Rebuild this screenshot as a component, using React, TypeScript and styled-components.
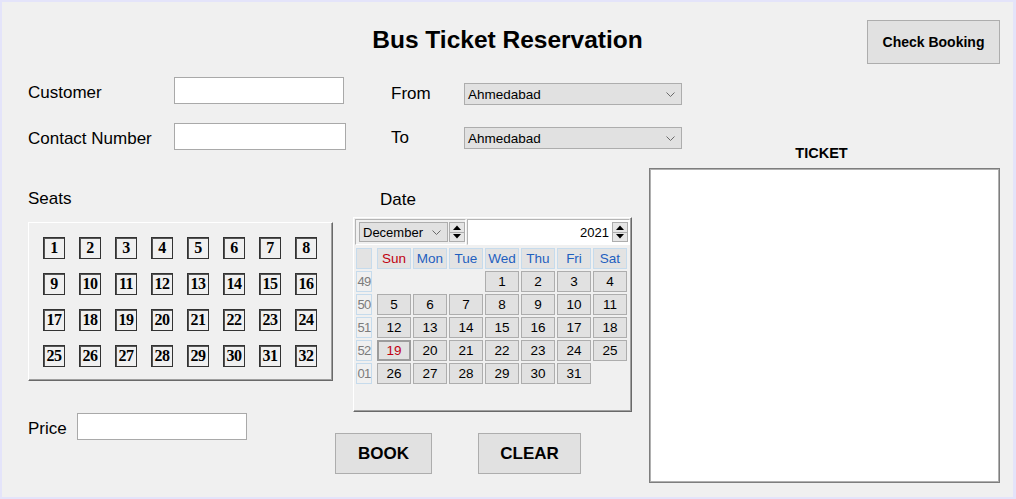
import React from 'react';
import styled, { createGlobalStyle } from 'styled-components';

const GlobalStyle = createGlobalStyle`
  html, body {
    margin: 0;
    padding: 0;
    background: #e4e4fa;
  }
  body {
    font-family: "Liberation Sans", Arial, sans-serif;
    color: #000;
  }
  * {
    box-sizing: border-box;
  }
`;

const SEATS = Array.from({ length: 32 }, (_, i) => i + 1);
const WEEK_DAYS = ['Sun', 'Mon', 'Tue', 'Wed', 'Thu', 'Fri', 'Sat'];
const WEEKS: { num: string; days: (number | null)[] }[] = [
  { num: '49', days: [null, null, null, 1, 2, 3, 4] },
  { num: '50', days: [5, 6, 7, 8, 9, 10, 11] },
  { num: '51', days: [12, 13, 14, 15, 16, 17, 18] },
  { num: '52', days: [19, 20, 21, 22, 23, 24, 25] },
  { num: '01', days: [26, 27, 28, 29, 30, 31, null] },
];
const SELECTED_DAY = 19;

const Chevron = () => (
  <svg width="9" height="5" viewBox="0 0 9 5">
    <polyline points="0.5,0.5 4.5,4.5 8.5,0.5" fill="none" stroke="#6a6a6a" strokeWidth="1" />
  </svg>
);

const Arrow = ({ up }: { up?: boolean }) => (
  <svg width="8" height="5" viewBox="0 0 8 5">
    <polygon points={up ? '0,5 4,0.5 8,5' : '0,0 4,4.5 8,0'} fill="#000" />
  </svg>
);

const SpinBox = () => (
  <Spinner>
    <SpinHalf>
      <Arrow up />
    </SpinHalf>
    <SpinHalf>
      <Arrow />
    </SpinHalf>
  </Spinner>
);

export default function App() {
  return (
    <>
      <GlobalStyle />
      <Window>
        <Panel>
          <Header>
            <Title>Bus Ticket Reservation</Title>
            <CheckButton>Check Booking</CheckButton>
          </Header>

          <Body>
            <LeftColumn>
              <FieldRow top={13}>
                <FieldLabel width={146}>Customer</FieldLabel>
                <TextBox width={170} />
              </FieldRow>
              <FieldRow top={19}>
                <FieldLabel width={146}>Contact Number</FieldLabel>
                <TextBox width={172} />
              </FieldRow>

              <SectionLabel top={39}>Seats</SectionLabel>
              <SeatsPanel>
                <SeatGrid>
                  {SEATS.map((n) => (
                    <Seat key={n}>{n}</Seat>
                  ))}
                </SeatGrid>
              </SeatsPanel>

              <FieldRow top={32}>
                <FieldLabel width={49}>Price</FieldLabel>
                <TextBox width={170} />
              </FieldRow>
            </LeftColumn>

            <MiddleColumn>
              <RouteRow top={19}>
                <RouteLabel>From</RouteLabel>
                <ComboBox>
                  <span>Ahmedabad</span>
                  <Chevron />
                </ComboBox>
              </RouteRow>
              <RouteRow top={22}>
                <RouteLabel>To</RouteLabel>
                <ComboBox>
                  <span>Ahmedabad</span>
                  <Chevron />
                </ComboBox>
              </RouteRow>

              <DateLabel>Date</DateLabel>
              <Calendar>
                <CalendarHeader>
                  <MonthFrame>
                    <MonthCombo>
                      <span>December</span>
                      <Chevron />
                    </MonthCombo>
                    <SpinBox />
                  </MonthFrame>
                  <YearFrame>
                    <YearField>2021</YearField>
                    <SpinBox />
                  </YearFrame>
                </CalendarHeader>

                <DayGrid>
                  <WeekCell blank />
                  {WEEK_DAYS.map((d) => (
                    <WeekDay key={d} sunday={d === 'Sun'}>
                      {d}
                    </WeekDay>
                  ))}
                  {WEEKS.map((w) => (
                    <React.Fragment key={w.num}>
                      <WeekCell>{w.num}</WeekCell>
                      {w.days.map((day, i) =>
                        day === null ? (
                          <EmptyDay key={`${w.num}-${i}`} />
                        ) : (
                          <Day key={day} selected={day === SELECTED_DAY}>
                            {day}
                          </Day>
                        ),
                      )}
                    </React.Fragment>
                  ))}
                </DayGrid>
              </Calendar>

              <ButtonRow>
                <ActionButton width={97}>BOOK</ActionButton>
                <ActionButton width={103}>CLEAR</ActionButton>
              </ButtonRow>
            </MiddleColumn>

            <RightColumn>
              <TicketLabel>TICKET</TicketLabel>
              <TicketBox />
            </RightColumn>
          </Body>
        </Panel>
      </Window>
    </>
  );
}

const Window = styled.div`
  width: 1016px;
  height: 499px;
  padding: 2px 3px 2px 2px;
  background: #e4e4fa;
`;

const Panel = styled.div`
  height: 100%;
  background: #f0f0f0;
  padding: 18px 13px 0 13px;
  display: flex;
  flex-direction: column;
`;

const Header = styled.div`
  display: grid;
  grid-template-columns: 1fr auto 1fr;
  height: 44px;
`;

const Title = styled.h1`
  grid-column: 2;
  align-self: start;
  margin: 6px 0 0;
  font-size: 24.5px;
  line-height: 28px;
  font-weight: bold;
  color: #000;
`;

const CheckButton = styled.button`
  grid-column: 3;
  justify-self: end;
  width: 133px;
  height: 44px;
  background: #e1e1e1;
  border: 1px solid #adadad;
  font-family: "Liberation Sans", Arial, sans-serif;
  font-size: 14px;
  font-weight: bold;
  color: #000;
  padding: 0;
`;

const Body = styled.div`
  display: flex;
  padding-left: 13px;
  flex: 1;
`;

const LeftColumn = styled.div`
  width: 307px;
  flex-shrink: 0;
  display: flex;
  flex-direction: column;
`;

const MiddleColumn = styled.div`
  width: 314px;
  flex-shrink: 0;
  display: flex;
  flex-direction: column;
`;

const RightColumn = styled.div`
  width: 351px;
  flex-shrink: 0;
  display: flex;
  flex-direction: column;
`;

const FieldRow = styled.div<{ top: number }>`
  display: flex;
  align-items: center;
  height: 27px;
  margin-top: ${(p) => p.top}px;
`;

const FieldLabel = styled.label<{ width: number }>`
  width: ${(p) => p.width}px;
  flex-shrink: 0;
  font-size: 17px;
  line-height: 20px;
  padding-top: 4px;
  white-space: nowrap;
`;

const TextBox = styled.input<{ width: number }>`
  width: ${(p) => p.width}px;
  height: 27px;
  flex-shrink: 0;
  background: #fff;
  border: 1px solid #a9a9a9;
  outline: none;
`;

const SectionLabel = styled.div<{ top: number }>`
  margin-top: ${(p) => p.top}px;
  font-size: 17px;
  line-height: 20px;
`;

const SeatsPanel = styled.div`
  margin-top: 13px;
  width: 305px;
  height: 159px;
  padding: 14px 0 0 14px;
  border-top: 1px solid #fff;
  border-left: 1px solid #fff;
  border-right: 1px solid #696969;
  border-bottom: 1px solid #696969;
  box-shadow: inset -1px -1px 0 #a0a0a0;
`;

const SeatGrid = styled.div`
  display: grid;
  grid-template-columns: repeat(8, 22px);
  grid-auto-rows: 22px;
  gap: 14px;
`;

const Seat = styled.button`
  width: 22px;
  height: 22px;
  padding: 0;
  background: #f0f0f0;
  border: 1px solid #333;
  box-shadow: inset 1px 1px 0 #555;
  font-family: "Liberation Serif", "Times New Roman", serif;
  font-weight: bold;
  font-size: 16px;
  line-height: 20px;
  color: #000;
  text-align: center;
  letter-spacing: -0.5px;
`;

const RouteRow = styled.div<{ top: number }>`
  display: flex;
  align-items: center;
  height: 22px;
  margin-top: ${(p) => p.top}px;
  padding-left: 56px;
`;

const RouteLabel = styled.span`
  width: 73px;
  flex-shrink: 0;
  font-size: 17px;
  line-height: 20px;
`;

const ComboBox = styled.div`
  width: 218px;
  height: 22px;
  flex-shrink: 0;
  display: flex;
  align-items: center;
  justify-content: space-between;
  padding: 0 6px 0 3px;
  background: #e1e1e1;
  border: 1px solid #adadad;
  font-size: 13.5px;
`;

const DateLabel = styled.div`
  margin-top: 41px;
  padding-left: 45px;
  font-size: 17px;
  line-height: 20px;
`;

const Calendar = styled.div`
  margin-top: 7px;
  margin-left: 18px;
  width: 279px;
  height: 195px;
  padding: 1px;
  background: #f0f0f0;
  border-top: 1px solid #fff;
  border-left: 1px solid #fff;
  border-right: 1px solid #696969;
  border-bottom: 1px solid #696969;
  box-shadow: inset -1px -1px 0 #a0a0a0;
`;

const CalendarHeader = styled.div`
  display: flex;
  gap: 1px;
  height: 26px;
`;

const MonthFrame = styled.div`
  width: 111px;
  display: flex;
  align-items: center;
  gap: 1px;
  padding-left: 3px;
  border: 1px solid #b4b4b4;
  border-right-color: #fff;
  border-bottom-color: #fff;
`;

const MonthCombo = styled.div`
  width: 89px;
  height: 20px;
  display: flex;
  align-items: center;
  justify-content: space-between;
  padding: 0 6px 0 3px;
  background: #e1e1e1;
  border: 1px solid #adadad;
  font-size: 13px;
`;

const YearFrame = styled.div`
  width: 163px;
  display: flex;
  align-items: center;
  gap: 1px;
  padding-right: 1px;
  background: #fff;
  border: 1px solid #b4b4b4;
  border-right-color: #fff;
  border-bottom-color: #fff;
`;

const YearField = styled.div`
  flex: 1;
  text-align: right;
  padding-right: 2px;
  font-size: 13px;
`;

const Spinner = styled.div`
  width: 16px;
  height: 20px;
  flex-shrink: 0;
  display: flex;
  flex-direction: column;
`;

const SpinHalf = styled.div`
  flex: 1;
  display: flex;
  align-items: center;
  justify-content: center;
  background: #e6e6e6;
  border: 1px solid #adadad;

  & + & {
    border-top: none;
  }
`;

const DayGrid = styled.div`
  display: grid;
  grid-template-columns: 19px repeat(7, 34px);
  grid-auto-rows: 21px;
  column-gap: 2px;
  row-gap: 2px;
  margin-top: 3px;
  padding-left: 1px;
  font-size: 13.5px;
`;

const WeekCell = styled.div<{ blank?: boolean }>`
  width: 16px;
  display: flex;
  align-items: center;
  justify-content: center;
  background: ${(p) => (p.blank ? '#e3e3e3' : '#f0f0f0')};
  border: 1px solid #c6dbec;
  color: #7c7c7c;
  font-size: 13px;
  letter-spacing: -0.8px;
`;

const WeekDay = styled.div<{ sunday?: boolean }>`
  display: flex;
  align-items: center;
  justify-content: center;
  background: #e3e3e3;
  border: 1px solid #c6dbec;
  color: ${(p) => (p.sunday ? '#c00010' : '#1f5fbf')};
`;

const Day = styled.div<{ selected?: boolean }>`
  display: flex;
  align-items: center;
  justify-content: center;
  background: #e1e1e1;
  border: ${(p) => (p.selected ? '2px solid #9c9c9c' : '1px solid #adadad')};
  color: ${(p) => (p.selected ? '#c00010' : '#000')};
`;

const EmptyDay = styled.div``;

const ButtonRow = styled.div`
  display: flex;
  gap: 46px;
  margin-top: 21px;
`;

const ActionButton = styled.button<{ width: number }>`
  width: ${(p) => p.width}px;
  height: 41px;
  padding: 0;
  background: #e1e1e1;
  border: 1px solid #adadad;
  font-family: "Liberation Sans", Arial, sans-serif;
  font-size: 17px;
  font-weight: bold;
  color: #000;
`;

const TicketLabel = styled.div`
  margin-top: 81px;
  margin-right: 6px;
  text-align: center;
  font-size: 14.5px;
  line-height: 16px;
  font-weight: bold;
`;

const TicketBox = styled.div`
  margin-top: 7px;
  width: 351px;
  height: 315px;
  background: #fff;
  border: 1px solid #7e7e7e;
  box-shadow: inset 0 0 0 1px #b0b0b0;
`;
